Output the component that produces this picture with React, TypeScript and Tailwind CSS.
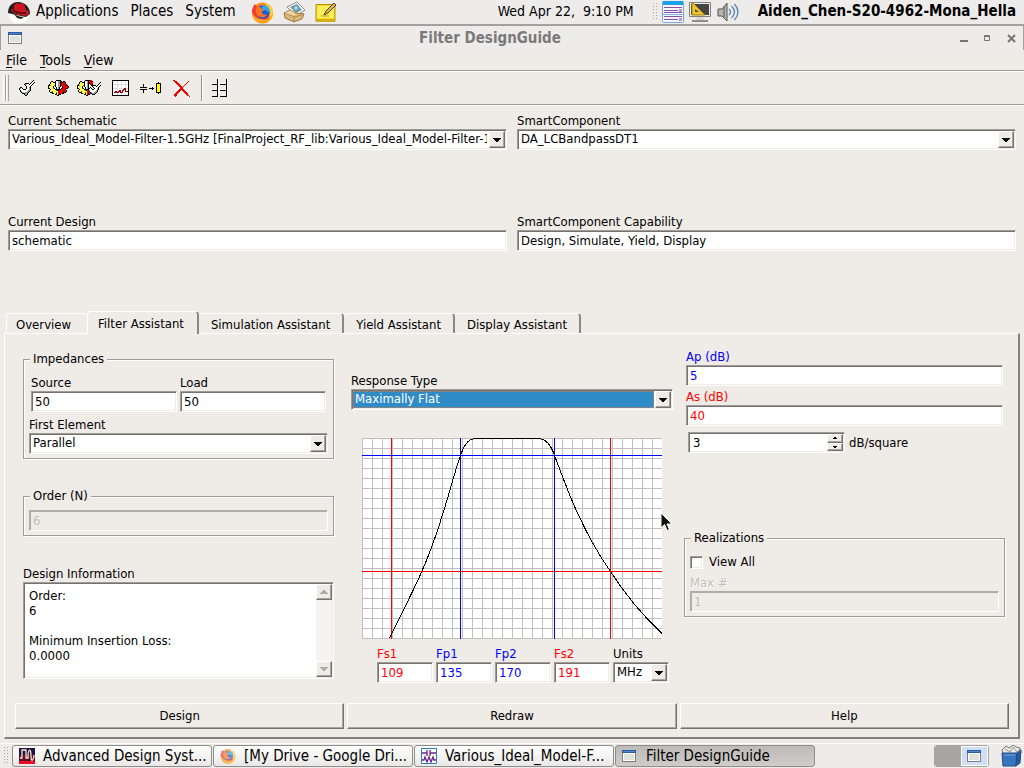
import { useState } from "react";
import type { ReactNode } from "react";

const inset =
  "border border-t-[#9f9c98] border-l-[#9f9c98] border-r-white border-b-white shadow-[inset_1px_1px_0_#75726f,inset_-1px_-1px_0_#efebe7]";
const insetDim =
  "border border-t-[#b0aba7] border-l-[#b0aba7] border-r-white border-b-white shadow-[inset_1px_1px_0_#b0aba7]";
const raised =
  "border border-t-white border-l-white border-r-[#75726f] border-b-[#75726f] shadow-[inset_-1px_-1px_0_#a8a5a1]";

type FieldProps = {
  id: string;
  label: string;
  value: string;
  tone?: string;
  disabled?: boolean;
  hideLabel?: boolean;
  className?: string;
};

function Field({ id, label, value, tone = "text-black", disabled, hideLabel, className = "" }: FieldProps) {
  const [text, setText] = useState(value);
  return (
    <div className={`flex min-w-0 flex-col ${className}`}>
      {!hideLabel && (
        <label
          htmlFor={id}
          className={`leading-[17px] ${disabled ? "text-[#c2beba] [text-shadow:1px_1px_0_white]" : tone}`}
        >
          {label}
        </label>
      )}
      <input
        id={id}
        aria-label={hideLabel ? label : undefined}
        value={text}
        disabled={disabled}
        onChange={(e) => setText(e.target.value)}
        className={`h-[21px] w-full px-[3px] outline-none ${disabled ? `${insetDim} text-[#c2beba]` : `${inset} bg-white ${tone}`}`}
      />
    </div>
  );
}

function Combo({ id, label, options, focused, className = "" }: { id: string; label: string; options: string[]; focused?: boolean; className?: string }) {
  return (
    <div className={`flex min-w-0 flex-col ${className}`}>
      <label htmlFor={id} className="leading-[17px]">{label}</label>
      <div className={`flex h-[21px] bg-white p-px ${inset}`}>
        <div className="relative flex min-w-0 flex-1">
          <select
            id={id}
            className={`min-w-0 flex-1 appearance-none overflow-hidden pb-px pl-0.5 pr-[18px] leading-4 outline-none ${
              focused ? "bg-[#308cc6] text-white" : "bg-white"
            }`}
          >
            {options.map((o) => (
              <option key={o}>{o}</option>
            ))}
          </select>
          {focused && <span className="pointer-events-none absolute inset-y-0 left-0 right-[17px] border border-dotted border-[#d97a48]" />}
          <span className="pointer-events-none absolute inset-y-0 right-0 flex w-[17px] bg-white pl-px">
            <span className={`flex flex-1 items-center justify-center bg-[#efebe7] ${raised}`}>
              <svg width="8" height="4" viewBox="0 0 8 4" shapeRendering="crispEdges">
                <path d="M0 0h8v1H0zM1 1h6v1H1zM2 2h4v1H2zM3 3h2v1H3z" />
              </svg>
            </span>
          </span>
        </div>
      </div>
    </div>
  );
}

function Group({ title, className = "", children }: { title: string; className?: string; children: ReactNode }) {
  return (
    <fieldset className={`min-w-0 border border-[#9f9c98] px-[5px] shadow-[1px_1px_0_white,inset_1px_1px_0_white] ${className}`}>
      <legend className="ml-px bg-[#efebe7] px-[3px] leading-4">{title}</legend>
      {children}
    </fieldset>
  );
}

const palette: Record<string, string> = {
  k: "#000", y: "#ffff5a", r: "#f00000", w: "#fff", g: "#9a9a9a", d: "#8a7c10", m: "#7a0000",
};

function Pixels({ rows }: { rows: string[] }) {
  return (
    <svg width={rows[0].length} height={rows.length} shapeRendering="crispEdges" aria-hidden="true">
      {rows.flatMap((row, y) =>
        row.split("").map((c, x) =>
          c === "." ? null : <rect key={`${x}-${y}`} x={x} y={y} width="1" height="1" fill={palette[c]} />,
        ),
      )}
    </svg>
  );
}

const wrench = [
  "..............k.",
  ".............k..",
  "............kw.k",
  "......kkkk.kw.k.",
  ".....kggwwkwwk..",
  "......kwwwwwk...",
  ".......kwwwk....",
  ".kk....kwwgk....",
  "kgwk...kwwgk....",
  "kwwwkkkwwwgk....",
  ".kwwwwwwwggk....",
  ".kgwwwwwggk.....",
  "..kggwgggk......",
  "...kkkggk.......",
  ".....kggk.......",
  "......kk........",
];
const gear = [
  "........kkkkk........",
  "...kk..kwwggkk.kk....",
  "..kyykkkwwggkkkrrk...",
  "..kyyyykwwggkrrrrk...",
  ".kyyyyykwwggkrrrrrk..",
  "kkdyyydkwwggkmrrrmkk.",
  "kyyyyk.kwwggk.krrrrrk",
  "kyyyyk..kwgk..krrrrrk",
  "kkyyydk.kwgk.kmrrrkk.",
  "..kyyyykkkkkkrrrrk...",
  ".kyyyyyydkkmrrrrrrk..",
  ".kyydyyyyyrrrrrmrrk..",
  "..kkkyyydyrmrrrkkk...",
  "....kkyykyrkrrkk.....",
  ".......kkyrkk........",
  ".........kk..........",
];
const gearWrench = [
  "........kkkkkrr.........",
  "...kk..kwwgkrrrk........",
  "..kyykkkwwgkrrrr.......k",
  "..kyyyykwwgkkrrr......k.",
  ".kyyyyykwwgk.krk.....kw.",
  "kkdyyydkwwgk..kkkkk.kw.k",
  "kyyyyk.kwwgk...kwwwkwwk.",
  "kyyyyk..kwgk.k..kwwwwk..",
  "kkyyydk.kwgkkwk..kwwgk..",
  "..kyyyykkkkkwwwkkwwwgk..",
  ".kyyyyyydkrkgwwwwwwgk...",
  ".kyydyyyyyrrkwwwwwggk...",
  "..kkkyyydyrmrkgwwggk....",
  "....kkyykyrkrkkgggk.....",
  ".......kkyrkk..kkk......",
  ".........kk.............",
];
const cross = [
  "rr................",
  ".rrr...........r..",
  "..rrr.........r...",
  "...rrr.......r....",
  "....rrr.....r.....",
  ".....rrr...r......",
  "......rrr.r.......",
  ".......rrr........",
  ".......rrr........",
  "......rrrrr.......",
  ".....rrr.rrr......",
  "....rrr...rrr.....",
  "...rrr.....rrr....",
  "..rrr.......rrr...",
  ".rrr.........rr...",
  ".rrr..........rr..",
  "..r.............r.",
];

function Fox({ size }: { size: number }) {
  return (
    <svg width={size} height={size} viewBox="0 0 24 24" aria-hidden="true">
      <circle cx="12" cy="12.5" r="11" fill="#ff8a16" />
      <path d="M14 1c5 3 9 6 9 12 0 4-2 7-4 8 2-7 0-13-5-20z" fill="#ffd42c" />
      <path d="M1 10C2 6 3 4 4 3l2 3 5-1 1 3 5 2c3 4 2 8-1 10-5 5-14 2-15-10z" fill="#f03b32" />
      <circle cx="12.500" cy="11.500" r="7" fill="#2859ce" />
      <path d="M12 4.500c4-1 8 3 8 8l-5-3-4 1z" fill="#2ca8ee" />
      <path d="M5 7c3-2 5-1 6 1l3 1-3 2c0 3 3 4 6 3-3 5-11 3-12-2z" fill="#ff7622" />
      <path d="M1 12c1 7 5 11 11 11 7 0 11-6 11-11-3 7-7 8-11 7-5 0-9-3-11-7z" fill="#ffa51c" />
    </svg>
  );
}

function WindowIcon() {
  return (
    <svg className="shrink-0" width="14" height="12" shapeRendering="crispEdges" aria-hidden="true">
      <path d="M0 0h14v12H0z" fill="#7d7d7b" />
      <path d="M0 0h14v3H0z" fill="#2c5aa0" />
      <path d="M1 1h12v1H1z" fill="#5385cb" />
      <path d="M1 3h12v8H1z" fill="#fff" />
      <path d="M2 4h10v6H2z" fill="#dfe1dc" />
    </svg>
  );
}

function Grip() {
  return (
    <svg width="5" height="18" aria-hidden="true" fill="#aaa7a4" shapeRendering="crispEdges">
      {[0, 3, 6, 9, 12, 15].map((y) => (
        <path key={y} d={`M0 ${y}h1v1h-1zM3 ${y}h1v1h-1z`} />
      ))}
    </svg>
  );
}

function TopPanel() {
  return (
    <header className="flex h-[26px] items-center border-b-2 border-[#a3a19f] bg-[#edeceb] text-[15px] leading-[22px]">
      <svg className="ml-2 shrink-0" width="22" height="23" viewBox="0 0 22 23" aria-hidden="true">
        <circle cx="11" cy="12" r="10.500" fill="#fff" />
        <path d="M0 12C0 5 4 1 10 1c7 0 12 5 12 12l-4 3-10-2z" fill="#202020" />
        <path d="M6 4l3-2 2 1 3-1c3 1 3 4 4 7 3 1 4 3 2 5-5 2-15-1-17-5 0-1 2-1 3-1z" fill="#cf1620" />
        <path d="M5 8c3 3 8 4 13 3v2C12 13 7 12 5 10z" fill="#35090b" />
        <path d="M6 13c3 2 6 3 10 3l-3 2-4-1z" fill="#222" />
      </svg>
      <nav className="ml-1.5 flex gap-3 pb-0.5">
        <button>Applications</button>
        <button>Places</button>
        <button>System</button>
      </nav>
      <div className="ml-[15px] flex items-center gap-[9px]">
        <Fox size={23} />
        <svg width="23" height="22" viewBox="0 0 23 22" aria-hidden="true">
          <path d="M4 6l10-5 8 8-9 6z" fill="#f5f4ee" stroke="#77777a" strokeWidth=".8" />
          <path d="M7 6l7-3 5 6-6 3z" fill="#67a1b8" />
          <circle cx="13" cy="7" r="2.500" fill="#aed0d8" stroke="#527c95" strokeWidth=".7" />
          <path d="M1 12l6-3 6 3 8 1-2 5-8 3-9-4z" fill="#dcb878" stroke="#8b6531" strokeWidth=".8" />
          <path d="M1 12l11 4 9-3M11 16v5" fill="none" stroke="#a77e42" strokeWidth=".8" />
          <path d="M2 12l5-2.500 5 2.500v3z" fill="#f0d7a2" />
        </svg>
        <svg width="22" height="21" viewBox="0 0 22 21" aria-hidden="true">
          <path d="M1 2.500h19v17H1z" fill="#f4db29" stroke="#b69009" />
          <path d="M2.500 4h16v12h-16z" fill="#fff05a" />
          <path d="M1 17h19v3H1z" fill="#d5ad15" />
          <path d="M6 14h8" stroke="#b99e26" />
          <path d="M9 13l2-4 8-8 2 2-8 8z" fill="#d9b067" stroke="#594319" />
        </svg>
      </div>
      <time className="ml-auto whitespace-pre pb-0.5 pr-[19px] text-sm leading-[22px]">Wed Apr 22,  9:10 PM</time>
      <div className="flex items-center gap-1">
        <Grip />
        <svg width="23" height="22" viewBox="0 0 23 22" aria-hidden="true">
          <rect x=".5" y=".5" width="21" height="21" rx="1" fill="#f8f5fa" stroke="#76a9d7" />
          <path d="M1 0h20v4H1z" fill="#18a1e8" />
          <path d="M2 6.500h18M2 9.500h14M2 11.500h18M2 15.500h18M2 18.500h14" stroke="#8751a8" />
          <path d="M17 8h3v3h-3zM17 17h3v3h-3z" fill="#b99acb" />
          <path d="M1 13.500h20" stroke="#77bdea" />
        </svg>
        <svg width="23" height="22" viewBox="0 0 23 22" aria-hidden="true">
          <path d="M.5 1.500h21v14H.5z" fill="#efefeb" stroke="#80807b" />
          <path d="M2 3h18v11H2z" fill="#444442" />
          <path d="M3 1v13h13z" fill="#edc52f" stroke="#a37e0a" />
          <path d="M6 8v3h4z" fill="#57533a" />
          <path d="M8 16h6l1 3H7z" fill="#d8d8d5" />
          <path d="M3 20h16" stroke="#8d8d89" strokeWidth="2" />
        </svg>
        <svg className="ml-px" width="23" height="20" viewBox="0 0 23 20" aria-hidden="true">
          <path d="M1 7h4l5-6v18l-5-5H1z" fill="#b5b5b0" stroke="#555753" />
          <path d="M7 5v10" stroke="#555753" />
          <path d="M12 7q3 3 0 6M14.500 4q6 6 0 12M17.500 2q7 8 0 16" fill="none" stroke="#6287bd" strokeWidth="1.400" />
        </svg>
      </div>
      <strong className="ml-[18px] mr-2 pb-0.5">Aiden_Chen-S20-4962-Mona_Hella</strong>
    </header>
  );
}

function TitleBar() {
  return (
    <div className="flex h-6 items-center border-x border-[#a3a19f] bg-[#edeceb] pl-[7px]">
      <WindowIcon />
      <h1 className="flex-1 pr-0.5 text-center text-[15px] font-bold text-[#7b7a79]">Filter DesignGuide</h1>
      <div className="flex items-center gap-4 pr-[7px] text-[#777573]">
        <button aria-label="Minimize"><svg width="8" height="8"><path d="M0 6h8v2H0z" fill="currentColor" /></svg></button>
        <button aria-label="Maximize"><svg width="7" height="6" fill="none" stroke="currentColor"><path d="M.5.5h5v5h-5zM0 1.500h6" /></svg></button>
        <button aria-label="Close"><svg width="9" height="9" stroke="currentColor" strokeWidth="2"><path d="M1 1l7 7M8 1L1 8" /></svg></button>
      </div>
    </div>
  );
}

function MenuBar() {
  return (
    <nav className="flex h-[21px] items-center gap-[13px] border-b border-[#9f9c98] pl-1.5 text-sm leading-4">
      {["File", "Tools", "View"].map((m) => (
        <button key={m}><span className="underline underline-offset-2">{m[0]}</span>{m.slice(1)}</button>
      ))}
    </nav>
  );
}

function Toolbar() {
  return (
    <div className="flex h-[34px] items-center border-t border-b border-t-white border-b-[#9f9c98] pl-[3px] shadow-[0_1px_0_white]">
      <span className="h-[26px] w-[3px] border-x border-l-white border-r-[#a3a19f]" />
      <span className="h-[26px] w-[3px] border-x border-l-white border-r-[#a3a19f]" />
      <button aria-label="Settings" className="ml-[10px]"><Pixels rows={wrench} /></button>
      <button aria-label="Design component" className="ml-[13px]"><Pixels rows={gear} /></button>
      <button aria-label="Redesign component" className="ml-2"><Pixels rows={gearWrench} /></button>
      <button aria-label="Simulate" className="ml-[11px]">
        <svg width="17" height="16" shapeRendering="crispEdges">
          <path d="M.5.5h16v15H.5z" fill="#fff" stroke="#000" />
          <path d="M5.500 1v14M9.500 1v14M13.500 1v14M1 4.500h15M1 8.500h15" stroke="#dedede" />
          <path d="M2 12.500h1v-1h1v1h2v-1h1v-1h1v2h2v-2h1V9h1V8h1v3h2v1" fill="none" stroke="#9c0000" />
        </svg>
      </button>
      <button aria-label="Transform" className="ml-[11px]">
        <svg width="22" height="12" shapeRendering="crispEdges">
          <path d="M0 5h7v1H0zM0 7h7v1H0zM3 2h1v3H3zM3 8h1v3H3zM9 6h5v1H9zM12 5h1v3h-1zM18 0h1v1h-1zM18 11h1v1h-1z" />
          <path d="M16.500 1.500h4v9h-4z" fill="#ff0" stroke="#000" />
        </svg>
      </button>
      <button aria-label="Delete" className="ml-[11px]"><Pixels rows={cross} /></button>
      <span className="ml-[10px] h-[26px] w-[2px] border-l border-[#8f8c89] bg-white" />
      <button aria-label="Layout grid" className="ml-[9px]">
        <svg width="16" height="18" shapeRendering="crispEdges" stroke="#000" fill="none">
          <path d="M6.500 0v18M15.500 0v18M0 4.500h16M0 10.500h16" stroke="#fff" />
          <path d="M5.500 0v18M14.500 0v18M0 5.500h6M8 5.500h7M0 11.500h6M8 11.500h7M0 17.500h6M8 17.500h7" />
        </svg>
      </button>
    </div>
  );
}

function ResponseChart() {
  const cols = Array.from({ length: 30 }, (_, i) => i * 10 + 0.5);
  const rows = Array.from({ length: 21 }, (_, i) => i * 10 + 0.5);
  return (
    <svg className="mx-auto mt-7 block" width="300" height="201" viewBox="0 0 300 201" role="img" aria-label="Filter response">
      <path d="M0 0h300v201H0z" fill="#fff" />
      <g stroke="#c0c0c0" shapeRendering="crispEdges">
        {cols.map((x) => <path key={x} d={`M${x} 0v201`} />)}
        {rows.map((y) => <path key={y} d={`M0 ${y}h300`} />)}
      </g>
      <g shapeRendering="crispEdges" fill="none">
        <path d="M29.500 0v201M248.500 0v201M0 133.500h300" stroke="#f00" />
        <path d="M98.500 0v201M192.500 0v201M0 17.500h300" stroke="#00f" />
        <path
          d="M27.500 200.500C38 178 50 156 60 133C69 113 75 95 82 72C88 53 92 36 98.500 17.500C103 5 107 .5 114 .5H176C184 .5 189 7 192.500 17.500C200 37 207 57 216 76C226 98 237 117 248.500 133.500C263 156 281 178 300 195.500"
          stroke="#000"
        />
      </g>
    </svg>
  );
}

const tabs = ["Overview", "Filter Assistant", "Simulation Assistant", "Yield Assistant", "Display Assistant"];

function Tabs() {
  return (
    <div role="tablist" className="flex h-[22px] items-end pl-0.5">
      {tabs.map((t, i) =>
        i === 1 ? (
          <button key={t} role="tab" aria-selected="true" className="relative top-px h-[23px] rounded-t-sm border-t border-l border-r-2 border-t-white border-l-white border-r-[#8a8784] bg-[#efebe7] pt-0.5 pl-2.5 pr-[13px] leading-4">
            {t}
          </button>
        ) : (
          <button
            key={t}
            role="tab"
            aria-selected="false"
            className={`h-5 rounded-t-sm border-t border-t-white pt-0.5 leading-4 ${i === 0 ? "border-l border-l-white pl-[9px] pr-4" : "border-r-2 border-r-[#8a8784] px-3"}`}
          >
            {t}
          </button>
        ),
      )}
    </div>
  );
}

function ScrollArrow({ up }: { up?: boolean }) {
  return (
    <button aria-label={up ? "Scroll up" : "Scroll down"} className={`flex h-4 w-4 items-center justify-center bg-[#efebe7] ${raised}`}>
      <svg width="8" height="4" shapeRendering="crispEdges" fill="#b0aba7">
        <path d={up ? "M3 0h2v1H3zM2 1h4v1H2zM1 2h6v1H1zM0 3h8v1H0z" : "M0 0h8v1H0zM1 1h6v1H1zM2 2h4v1H2zM3 3h2v1H3z"} />
      </svg>
    </button>
  );
}

function AssistantPanel() {
  const [viewAll, setViewAll] = useState(false);
  return (
    <section className="flex flex-1 flex-col border border-b-2 border-r-2 border-t-white border-l-white border-r-[#83807d] border-b-[#83807d] pb-2">
      <div className="grid grid-cols-[311fr_339fr_332fr] pl-[18px] pr-[13px]">
        <div className="flex flex-col pt-[17px]">
          <Group title="Impedances" className="pt-[7px] pb-1">
            <div className="grid grid-cols-2 gap-[3px] px-[2px]">
              <Field id="source" label="Source" value="50" />
              <Field id="load" label="Load" value="50" />
            </div>
            <Combo id="first" label="First Element" options={["Parallel", "Series"]} className="mt-1" />
          </Group>
          <Group title="Order (N)" className="mt-[29px] pt-1.5 pb-1">
            <Field id="order" label="Order (N)" value="6" disabled hideLabel />
          </Group>
          <label htmlFor="info" className="mt-[29px] leading-[17px]">Design Information</label>
          <div className={`flex h-[97px] bg-white p-px ${inset}`}>
            <textarea
              id="info"
              readOnly
              className="flex-1 resize-none overflow-hidden px-1 py-1 leading-[15px] outline-none"
              value={"Order:\n6\n\nMinimum Insertion Loss:\n0.0000"}
            />
            <div className="flex w-4 flex-col justify-between bg-[#f6f4f2]">
              <ScrollArrow up />
              <ScrollArrow />
            </div>
          </div>
        </div>

        <div className="flex flex-col pl-[17px] pt-[38px]">
          <Combo id="response" label="Response Type" options={["Maximally Flat", "Chebyshev", "Elliptic"]} focused />
          <ResponseChart />
          <div className="mt-1.5 grid grid-cols-5 gap-[3px] pl-[26px] pr-1">
            <Field id="fs1" label="Fs1" value="109" tone="text-[#f00]" />
            <Field id="fp1" label="Fp1" value="135" tone="text-[#00f]" />
            <Field id="fp2" label="Fp2" value="170" tone="text-[#00f]" />
            <Field id="fs2" label="Fs2" value="191" tone="text-[#f00]" />
            <Combo id="units" label="Units" options={["MHz", "GHz"]} />
          </div>
        </div>

        <div className="flex flex-col pl-[11px] pt-[14px]">
          <Field id="ap" label="Ap (dB)" value="5" tone="text-[#00f]" className="px-0.5" />
          <Field id="as" label="As (dB)" value="40" tone="text-[#f00]" className="mt-0.5 px-0.5" />
          <div className="mt-1.5 flex items-center gap-1 pl-1">
            <div className={`flex h-[21px] w-[157px] bg-white p-px ${inset}`}>
              <input id="db" defaultValue="3" className="min-w-0 flex-1 pl-[3px] outline-none" />
              <div className="flex w-4 flex-col">
                {["Increase", "Decrease"].map((n) => (
                  <button key={n} aria-label={n} className={`flex flex-1 items-center justify-center bg-[#efebe7] ${raised}`}>
                    <svg width="4" height="2" shapeRendering="crispEdges">
                      <path d={n === "Increase" ? "M1 0h2v1H1zM0 1h4v1H0z" : "M0 0h4v1H0zM1 1h2v1H1z"} />
                    </svg>
                  </button>
                ))}
              </div>
            </div>
            <label htmlFor="db">dB/square</label>
          </div>
          <Group title="Realizations" className="mt-[77px] pt-[7px] pb-1">
            <div className="flex items-center gap-1.5 leading-[18px]">
              <input
                id="view-all"
                type="checkbox"
                checked={viewAll}
                onChange={(e) => setViewAll(e.target.checked)}
                className={`h-[13px] w-[13px] appearance-none bg-white checked:bg-[#308cc6] ${inset}`}
              />
              <label htmlFor="view-all">View All</label>
            </div>
            <Field id="max" label="Max #" value="1" disabled={!viewAll} className="mt-[3px]" />
          </Group>
        </div>
      </div>
      <div className="mt-auto grid grid-cols-3 gap-[3px] pl-2.5 pr-[9px]">
        {["Design", "Redraw", "Help"].map((b) => (
          <button key={b} className={`h-[26px] ${raised}`}>{b}</button>
        ))}
      </div>
    </section>
  );
}

function Task({ icon, active, children }: { icon: ReactNode; active?: boolean; children: ReactNode }) {
  return (
    <button
      className={`flex h-[22px] w-[200px] items-center gap-2 rounded-[3px] border border-[#8f8d8b] pl-1.5 text-[15px] whitespace-nowrap ${
        active ? "bg-linear-to-b from-[#bdbab7] to-[#cfccc9]" : "bg-linear-to-b from-white to-[#e9e8e6]"
      }`}
    >
      <span className="flex w-4 shrink-0">{icon}</span>
      {children}
    </button>
  );
}

function TaskBar() {
  return (
    <footer className="flex h-[25px] items-center border-t border-white bg-[#edeceb] pl-1">
      <Grip />
      <div className="ml-[3px] flex gap-px">
        <Task
          icon={
            <svg width="16" height="16" aria-hidden="true">
              <path d="M0 0h16v13H0z" fill="#201544" /><path d="M0 7h16v6H0z" fill="#5b1329" /><path d="M0 13h16v3H0z" fill="#ed0c28" />
              <path d="M1 10h2V2h4v8h2c0-10 3-10 3-2s3 3 3-1" fill="none" stroke="#ffe5d0" strokeWidth="1.300" />
            </svg>
          }
        >
          Advanced Design Syst...
        </Task>
        <Task icon={<span className="opacity-70"><Fox size={16} /></span>}>[My Drive - Google Dri...</Task>
        <Task
          icon={
            <svg width="16" height="16" aria-hidden="true" fill="none">
              <path d="M.5.5h15v15H.5z" fill="#fff" stroke="#287cb8" />
              <path d="M1 5h5M6 2v6M9 2v6M9 5h6M1 12h2l1-3 2 5 2-5 2 5 2-5 1 3h2" stroke="#69248c" strokeWidth="1.300" />
            </svg>
          }
        >
          Various_Ideal_Model-F...
        </Task>
        <Task active icon={<WindowIcon />}>Filter DesignGuide</Task>
      </div>
      <div className="ml-auto flex h-[22px] w-[55px] overflow-hidden rounded-[3px] border border-[#a6a3a0]">
        <button aria-label="Workspace 1" className="flex-1 bg-[#a8a5a2]" />
        <button aria-label="Workspace 2" className="flex flex-1 items-center justify-center border border-white bg-[#cfdff5]"><WindowIcon /></button>
      </div>
      <button aria-label="Trash" className="ml-3 mr-0.5">
        <svg width="21" height="22" viewBox="0 0 21 22">
          <path d="M1 5l4-4 3 2 4-3 3 2 4 1 1 5-4 4H3z" fill="#e8e9e5" stroke="#777" />
          <path d="M4 4l5 3 3-5 4 5 3-3" fill="none" stroke="#9b9b97" />
          <path d="M1 8h15l-1 13H2z" fill="#3775bd" stroke="#204a87" />
          <path d="M16 8l4-3-1 13-4 3z" fill="#285c9e" stroke="#204a87" />
          <path d="M3 10h11" stroke="#79a5d8" />
        </svg>
      </button>
    </footer>
  );
}

export default function App() {
  return (
    <div className="relative flex min-h-screen flex-col bg-[#efebe7] font-['DejaVu_Sans_Condensed','DejaVu_Sans',sans-serif] text-[13px] text-black">
      <TopPanel />
      <TitleBar />
      <MenuBar />
      <Toolbar />
      <main className="flex flex-1 flex-col pt-[7px]">
        <div className="grid grid-cols-2 gap-x-2.5 gap-y-[63px] px-2">
          <Combo id="schematic" label="Current Schematic" options={["Various_Ideal_Model-Filter-1.5GHz [FinalProject_RF_lib:Various_Ideal_Model-Filter-1.5GHz:schematic]"]} />
          <Combo id="component" label="SmartComponent" options={["DA_LCBandpassDT1"]} />
          <Field id="design" label="Current Design" value="schematic" />
          <Field id="capability" label="SmartComponent Capability" value="Design, Simulate, Yield, Display" />
        </div>
        <div className="mt-[60px] flex flex-1 flex-col pb-1 pl-1 pr-1">
          <Tabs />
          <AssistantPanel />
        </div>
      </main>
      <TaskBar />
      <svg className="pointer-events-none absolute left-[660px] top-[512px]" width="13" height="20" viewBox="0 0 13 20" aria-hidden="true">
        <path d="M1 1v15l3.500-3.500L7 18.500l2.500-1L7 12h5z" fill="#111" stroke="#fff" strokeWidth="1" />
      </svg>
    </div>
  );
}
